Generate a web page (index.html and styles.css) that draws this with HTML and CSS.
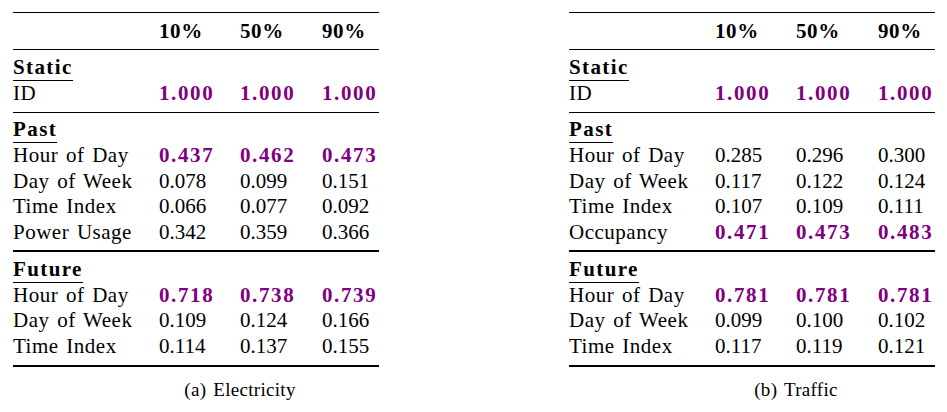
FILE: index.html
```html
<!DOCTYPE html>
<html>
<head>
<meta charset="utf-8">
<link rel="stylesheet" href="styles.css">
</head>
<body>
<div class="page">
  <div class="sub">
    <div class="tbl">
      <div class="rule thin"></div>
      <div class="row head"><span></span><span>10%</span><span>50%</span><span>90%</span></div>
      <div class="rule thin"></div>
      <div class="group g-static">
        <div class="row"><span class="sec">Static</span></div>
        <div class="row"><span class="lbl">ID</span><span class="best">1.000</span><span class="best">1.000</span><span class="best">1.000</span></div>
      </div>
      <div class="rule thin"></div>
      <div class="group g-past">
        <div class="row"><span class="sec">Past</span></div>
        <div class="row"><span class="lbl">Hour of Day</span><span class="best">0.437</span><span class="best">0.462</span><span class="best">0.473</span></div>
        <div class="row"><span class="lbl">Day of Week</span><span>0.078</span><span>0.099</span><span>0.151</span></div>
        <div class="row"><span class="lbl">Time Index</span><span>0.066</span><span>0.077</span><span>0.092</span></div>
        <div class="row"><span class="lbl">Power Usage</span><span>0.342</span><span>0.359</span><span>0.366</span></div>
      </div>
      <div class="rule thick"></div>
      <div class="group g-future">
        <div class="row"><span class="sec">Future</span></div>
        <div class="row"><span class="lbl">Hour of Day</span><span class="best">0.718</span><span class="best">0.738</span><span class="best">0.739</span></div>
        <div class="row"><span class="lbl">Day of Week</span><span>0.109</span><span>0.124</span><span>0.166</span></div>
        <div class="row"><span class="lbl">Time Index</span><span>0.114</span><span>0.137</span><span>0.155</span></div>
      </div>
      <div class="rule thick"></div>
    </div>
    <div class="caption">(a) Electricity</div>
  </div>
  <div class="sub">
    <div class="tbl">
      <div class="rule thin"></div>
      <div class="row head"><span></span><span>10%</span><span>50%</span><span>90%</span></div>
      <div class="rule thin"></div>
      <div class="group g-static">
        <div class="row"><span class="sec">Static</span></div>
        <div class="row"><span class="lbl">ID</span><span class="best">1.000</span><span class="best">1.000</span><span class="best">1.000</span></div>
      </div>
      <div class="rule thin"></div>
      <div class="group g-past">
        <div class="row"><span class="sec">Past</span></div>
        <div class="row"><span class="lbl">Hour of Day</span><span>0.285</span><span>0.296</span><span>0.300</span></div>
        <div class="row"><span class="lbl">Day of Week</span><span>0.117</span><span>0.122</span><span>0.124</span></div>
        <div class="row"><span class="lbl">Time Index</span><span>0.107</span><span>0.109</span><span>0.111</span></div>
        <div class="row"><span class="lbl">Occupancy</span><span class="best">0.471</span><span class="best">0.473</span><span class="best">0.483</span></div>
      </div>
      <div class="rule thick"></div>
      <div class="group g-future">
        <div class="row"><span class="sec">Future</span></div>
        <div class="row"><span class="lbl">Hour of Day</span><span class="best">0.781</span><span class="best">0.781</span><span class="best">0.781</span></div>
        <div class="row"><span class="lbl">Day of Week</span><span>0.099</span><span>0.100</span><span>0.102</span></div>
        <div class="row"><span class="lbl">Time Index</span><span>0.117</span><span>0.119</span><span>0.121</span></div>
      </div>
      <div class="rule thick"></div>
    </div>
    <div class="caption">(b) Traffic</div>
  </div>
</div>
</body>
</html>
```

FILE: styles.css
```css
html, body {
  margin: 0;
  padding: 0;
  background: #ffffff;
}
body {
  font-family: "Liberation Serif", "Times New Roman", serif;
  font-size: 21px;
  color: #000000;
}
.page {
  display: flex;
  gap: 190px;
  padding: 12px 0 0 13px;
}
.sub {
  width: 366px;
  display: flex;
  flex-direction: column;
}
.tbl {
  display: flex;
  flex-direction: column;
}
.rule {
  background: #000000;
}
.rule.thin {
  height: 1px;
}
.rule.thick {
  height: 2px;
}
.row {
  display: grid;
  grid-template-columns: 146px 81px 82px 1fr;
  height: 25.7px;
  line-height: 25.7px;
  white-space: nowrap;
}
.row.head {
  height: 36px;
  line-height: 36px;
  font-weight: bold;
  letter-spacing: 0.6px;
}
.group {
  display: flex;
  flex-direction: column;
}
.g-static {
  padding-top: 5px;
  padding-bottom: 6px;
}
.g-past {
  padding-top: 4px;
  padding-bottom: 4px;
}
.g-future {
  padding-top: 5px;
  padding-bottom: 5px;
}
.lbl {
  letter-spacing: 0.5px;
  word-spacing: 2px;
}
.sec {
  font-weight: bold;
  letter-spacing: 1.4px;
  justify-self: start;
  border-bottom: 1px solid #000000;
  line-height: 25px;
  height: 25px;
}
.best {
  color: #800080;
  font-weight: bold;
  letter-spacing: 1.6px;
}
.caption {
  font-size: 19px;
  padding-left: 88px;
  text-align: center;
  margin-top: 11px;
  line-height: 24px;
  letter-spacing: 0.3px;
  word-spacing: 2px;
}
```
